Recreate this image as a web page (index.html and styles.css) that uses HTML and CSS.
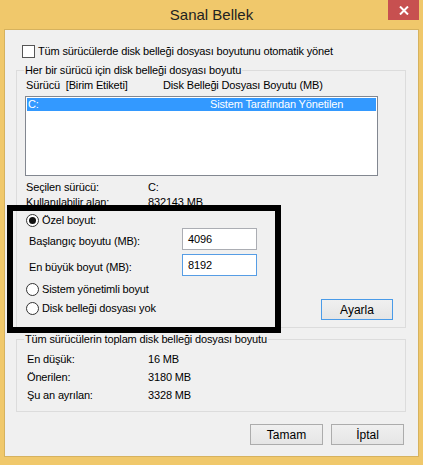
FILE: index.html
```html
<!DOCTYPE html>
<html lang="tr">
<head>
<meta charset="utf-8">
<title>Sanal Bellek</title>
<link rel="stylesheet" href="styles.css">
</head>
<body>
<div class="window">
  <div class="titlebar">
    <div></div>
    <div class="title">Sanal Bellek</div>
    <div class="close-wrap">
      <div class="close">
        <svg width="10" height="9" viewBox="0 0 10 9"><path d="M1 0.5 L9 8.5 M9 0.5 L1 8.5" stroke="#fff" stroke-width="2" fill="none"/></svg>
      </div>
    </div>
  </div>
  <div class="client">
    <div class="auto"><span class="checkbox"></span><span>Tüm sürücülerde disk belleği dosyası boyutunu otomatik yönet</span></div>

    <fieldset class="group g1">
      <legend>Her bir sürücü için disk belleği dosyası boyutu</legend>
      <div class="cols"><span class="c1">Sürücü&nbsp; [Birim Etiketi]</span><span>Disk Belleği Dosyası Boyutu (MB)</span></div>
      <div class="list">
        <div class="item sel"><span class="c-drive">C:</span><span>Sistem Tarafından Yönetilen</span></div>
      </div>
      <div class="info">
        <div class="kv"><span class="k">Seçilen sürücü:</span><span>C:</span></div>
        <div class="kv"><span class="k">Kullanılabilir alan:</span><span>832143 MB</span></div>
      </div>
      <div class="opt first"><span class="radio on"></span><span>Özel boyut:</span></div>
      <div class="size-row"><span class="size-label">Başlangıç boyutu (MB):</span><span class="textbox">4096</span></div>
      <div class="size-row second"><span class="size-label">En büyük boyut (MB):</span><span class="textbox focus">8192</span></div>
      <div class="opt sys"><span class="radio"></span><span>Sistem yönetimli boyut</span></div>
      <div class="last-row">
        <div class="opt none"><span class="radio"></span><span>Disk belleği dosyası yok</span></div>
        <div class="btn default">Ayarla</div>
      </div>
    </fieldset>

    <fieldset class="group g2">
      <legend>Tüm sürücülerin toplam disk belleği dosyası boyutu</legend>
      <div class="totals">
        <div class="trow"><span class="tk">En düşük:</span><span>16 MB</span></div>
        <div class="trow"><span class="tk">Önerilen:</span><span>3180 MB</span></div>
        <div class="trow"><span class="tk">Şu an ayrılan:</span><span>3328 MB</span></div>
      </div>
    </fieldset>

    <div class="buttons">
      <div class="btn">Tamam</div>
      <div class="btn">İptal</div>
    </div>

    <div class="annot"></div>
  </div>
</div>
</body>
</html>
```

FILE: styles.css
```css
* { box-sizing: border-box; }
html, body { margin: 0; padding: 0; }
body {
  background: #F0C86B;
  font-family: "Liberation Sans", Arial, sans-serif;
  font-size: 11px;
  letter-spacing: -0.15px;
  color: #000;
}
.window {
  width: 423px;
  height: 465px;
  background: #F0C86B;
}
.titlebar {
  height: 29px;
  display: grid;
  grid-template-columns: 1fr auto 1fr;
  align-items: start;
}
.title {
  font-size: 15px;
  letter-spacing: 0;
  color: #222;
  line-height: 29px;
  height: 29px;
}
.close-wrap {
  display: flex;
  justify-content: flex-end;
  padding-right: 4px;
}
.close {
  width: 31px;
  height: 20px;
  background: #C75050;
  display: flex;
  align-items: center;
  justify-content: center;
}
.client {
  position: relative;
  margin-left: 4px;
  width: 415px;
  height: 428px;
  background: #F0F0F0;
  border: 1px solid #D6B25E;
}
.auto {
  margin-top: 15px;
  padding-left: 17px;
  height: 13px;
  line-height: 13px;
  display: flex;
  align-items: center;
  gap: 3px;
}
.checkbox {
  width: 13px;
  height: 13px;
  border: 1px solid #555;
  background: #fff;
  flex: none;
}
.group {
  margin: 0 12px 0 11px;
  padding: 0;
  border: 1px solid #DCDCDC;
  min-width: 0;
}
.group legend {
  margin-left: 7px;
  padding: 0 1px;
  line-height: 14px;
  height: 14px;
}
.g1 { margin-top: 5px; padding-bottom: 7px; }
.cols {
  margin-top: 1px;
  padding-left: 9px;
  line-height: 14px;
  height: 14px;
  display: flex;
}
.c1 { width: 137px; }
.list {
  margin: 4px 0 0 8px;
  width: 353px;
  height: 80px;
  border: 1px solid #828790;
  padding: 1px;
  background: #fff;
}
.item {
  height: 13px;
  line-height: 13px;
  display: flex;
}
.item.sel { background: #3399FF; color: #fff; }
.c-drive { width: 183px; padding-left: 1px; }
.info { margin-top: 4px; padding-left: 9px; }
.kv { display: flex; line-height: 15px; height: 15px; }
.k { width: 122px; }
.opt {
  display: flex;
  align-items: center;
  gap: 3px;
  height: 15px;
  line-height: 15px;
  padding-left: 9px;
}
.opt.first { margin-top: 3px; }
.opt.sys { margin-top: 6px; }
.radio {
  width: 13px;
  height: 13px;
  border-radius: 50%;
  border: 1px solid #333;
  background: #fff;
  flex: none;
  display: flex;
  align-items: center;
  justify-content: center;
}
.radio.on::after {
  content: "";
  width: 7px;
  height: 7px;
  border-radius: 50%;
  background: #111;
}
.size-row {
  display: flex;
  align-items: center;
  height: 22px;
  padding-left: 12px;
}
.size-row.second { margin-top: 4px; }
.size-label { width: 153px; padding-top: 3px; }
.textbox {
  width: 75px;
  height: 22px;
  border: 1px solid #ABADB3;
  background: #fff;
  padding-left: 5px;
  line-height: 20px;
}
.textbox.focus { border-color: #569DE5; }
.last-row {
  display: flex;
  align-items: flex-start;
  margin-top: 2px;
  height: 21px;
}
.last-row .opt { margin-top: 2px; }
.btn {
  width: 73px;
  height: 21px;
  border: 1px solid #ACACAC;
  background: linear-gradient(#F0F0F0, #E5E5E5);
  display: flex;
  align-items: center;
  justify-content: center;
  font-size: 12px;
  letter-spacing: 0;
}
.last-row .btn { margin-left: auto; margin-right: 12px; width: 72px; }
.btn.default { border-color: #4A9BE8; }
.g2 { margin-top: 4px; padding-bottom: 7px; }
.totals { margin-top: 4px; padding-left: 10px; }
.trow { display: flex; line-height: 18px; height: 18px; }
.tk { width: 121px; }
.buttons {
  margin-top: 12px;
  display: flex;
  justify-content: flex-end;
  gap: 8px;
  padding-right: 14px;
}
.annot {
  position: absolute;
  left: 2px;
  top: 175px;
  width: 274px;
  height: 128px;
  border: 6px solid #000;
}
```
